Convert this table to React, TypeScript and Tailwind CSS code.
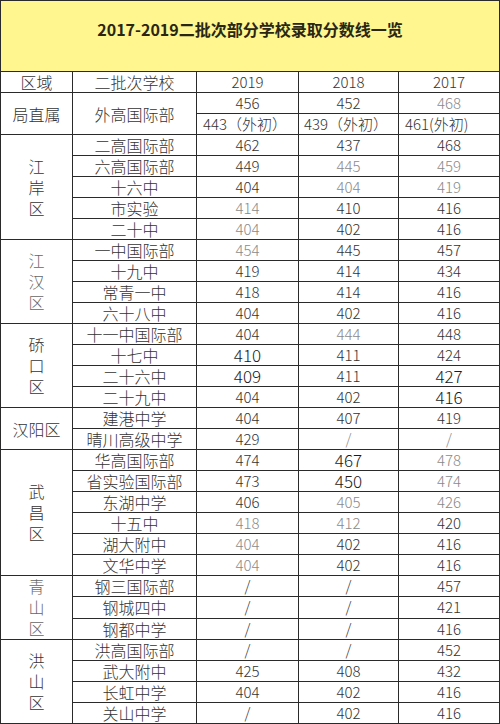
import React from 'react'

type Cell = string | { v: string; t: 'g' | 'b' }
type Row = { school: string; s: [Cell, Cell, Cell] }
type Group = { area: string; vertical: boolean; dim?: boolean; rows: Row[] }

const g = (v: string): Cell => ({ v, t: 'g' })
const b = (v: string): Cell => ({ v, t: 'b' })

const GROUPS: Group[] = [
  {
    area: '江岸区', vertical: true,
    rows: [
      { school: '二高国际部', s: ['462', '437', '468'] },
      { school: '六高国际部', s: ['449', g('445'), g('459')] },
      { school: '十六中', s: ['404', g('404'), g('419')] },
      { school: '市实验', s: [g('414'), '410', '416'] },
      { school: '二十中', s: [g('404'), '402', '416'] },
    ],
  },
  {
    area: '江汉区', vertical: true, dim: true,
    rows: [
      { school: '一中国际部', s: [g('454'), '445', '457'] },
      { school: '十九中', s: ['419', '414', '434'] },
      { school: '常青一中', s: ['418', '414', '416'] },
      { school: '六十八中', s: ['404', '402', '416'] },
    ],
  },
  {
    area: '硚口区', vertical: true,
    rows: [
      { school: '十一中国际部', s: ['404', g('444'), '448'] },
      { school: '十七中', s: [b('410'), '411', '424'] },
      { school: '二十六中', s: [b('409'), '411', b('427')] },
      { school: '二十九中', s: ['404', '402', b('416')] },
    ],
  },
  {
    area: '汉阳区', vertical: false,
    rows: [
      { school: '建港中学', s: ['404', '407', '419'] },
      { school: '晴川高级中学', s: ['429', g('/'), g('/')] },
    ],
  },
  {
    area: '武昌区', vertical: true,
    rows: [
      { school: '华高国际部', s: ['474', b('467'), g('478')] },
      { school: '省实验国际部', s: ['473', b('450'), g('474')] },
      { school: '东湖中学', s: ['406', g('405'), g('426')] },
      { school: '十五中', s: [g('418'), g('412'), '420'] },
      { school: '湖大附中', s: [g('404'), '402', '416'] },
      { school: '文华中学', s: [g('404'), '402', '416'] },
    ],
  },
  {
    area: '青山区', vertical: true, dim: true,
    rows: [
      { school: '钢三国际部', s: ['/', '/', '457'] },
      { school: '钢城四中', s: ['/', '/', '421'] },
      { school: '钢都中学', s: ['/', '/', '416'] },
    ],
  },
  {
    area: '洪山区', vertical: true,
    rows: [
      { school: '洪高国际部', s: ['/', '/', '452'] },
      { school: '武大附中', s: ['425', '408', '432'] },
      { school: '长虹中学', s: ['404', '402', '416'] },
      { school: '关山中学', s: ['/', '402', '416'] },
    ],
  },
]

const td = 'border border-[#2a2a2a] p-0 h-[21px] text-center align-middle leading-[18px]'

function Score({ c }: { c: Cell }) {
  if (typeof c === 'string') return <span>{c}</span>
  if (c.t === 'g') return <span className="text-[#8a8a8a]">{c.v}</span>
  return <span className="text-[17px] text-[#1a1a1a]">{c.v}</span>
}

export default function App() {
  return (
    <div className="w-[500px] h-[724px] bg-white overflow-hidden" style={{ fontFamily: '"Noto Sans CJK SC", "Noto Sans", sans-serif' }}>
      <table className="table-fixed border-collapse w-[499px] text-[#333]">
        <colgroup>
          <col className="w-[72px]" />
          <col className="w-[124px]" />
          <col className="w-[102px]" />
          <col className="w-[100px]" />
          <col className="w-[101px]" />
        </colgroup>
        <tbody>
          <tr>
            <td colSpan={5} className="border border-[#2a2a2a] h-[71px] bg-[#fff68f] p-0 align-top text-center">
              <div className="pt-[17px] text-[16px] font-bold leading-[22px] text-[#2a2614]">
                2017-2019二批次部分学校录取分数线一览
              </div>
            </td>
          </tr>
          <tr className="text-[16px] font-light">
            <td className={td}>区域</td>
            <td className={td}>二批次学校</td>
            <td className={td + ' text-[15px]'}>2019</td>
            <td className={td + ' text-[15px]'}>2018</td>
            <td className={td + ' text-[15px]'}>2017</td>
          </tr>
          <tr className="text-[15px] font-light">
            <td rowSpan={2} className={td + ' text-[16px]'}>局直属</td>
            <td rowSpan={2} className={td + ' text-[16px]'}>外高国际部</td>
            <td className={td}>456</td>
            <td className={td}>452</td>
            <td className={td}><span className="text-[#8a8a8a]">468</span></td>
          </tr>
          <tr className="text-[15px] font-light">
            <td className={td + ' text-left pl-[6px]'}>443（外初）</td>
            <td className={td + ' text-left pl-[5px]'}>439（外初）</td>
            <td className={td + ' text-left pl-[6px]'}>461(外初)</td>
          </tr>
          {GROUPS.map((grp) =>
            grp.rows.map((r, i) => (
              <tr key={grp.area + r.school} className="text-[15px] font-light">
                {i === 0 && (
                  <td rowSpan={grp.rows.length} className={td + ' text-[16px] ' + (grp.dim ? 'text-[#666]' : '')}>
                    {grp.vertical ? (
                      <div className="flex flex-col items-center leading-[21px]">
                        {grp.area.split('').map((ch) => <span key={ch}>{ch}</span>)}
                      </div>
                    ) : (
                      grp.area
                    )}
                  </td>
                )}
                <td className={td + ' text-[16px]'}>{r.school}</td>
                {r.s.map((c, j) => (
                  <td key={j} className={td}><Score c={c} /></td>
                ))}
              </tr>
            ))
          )}
        </tbody>
      </table>
    </div>
  )
}
